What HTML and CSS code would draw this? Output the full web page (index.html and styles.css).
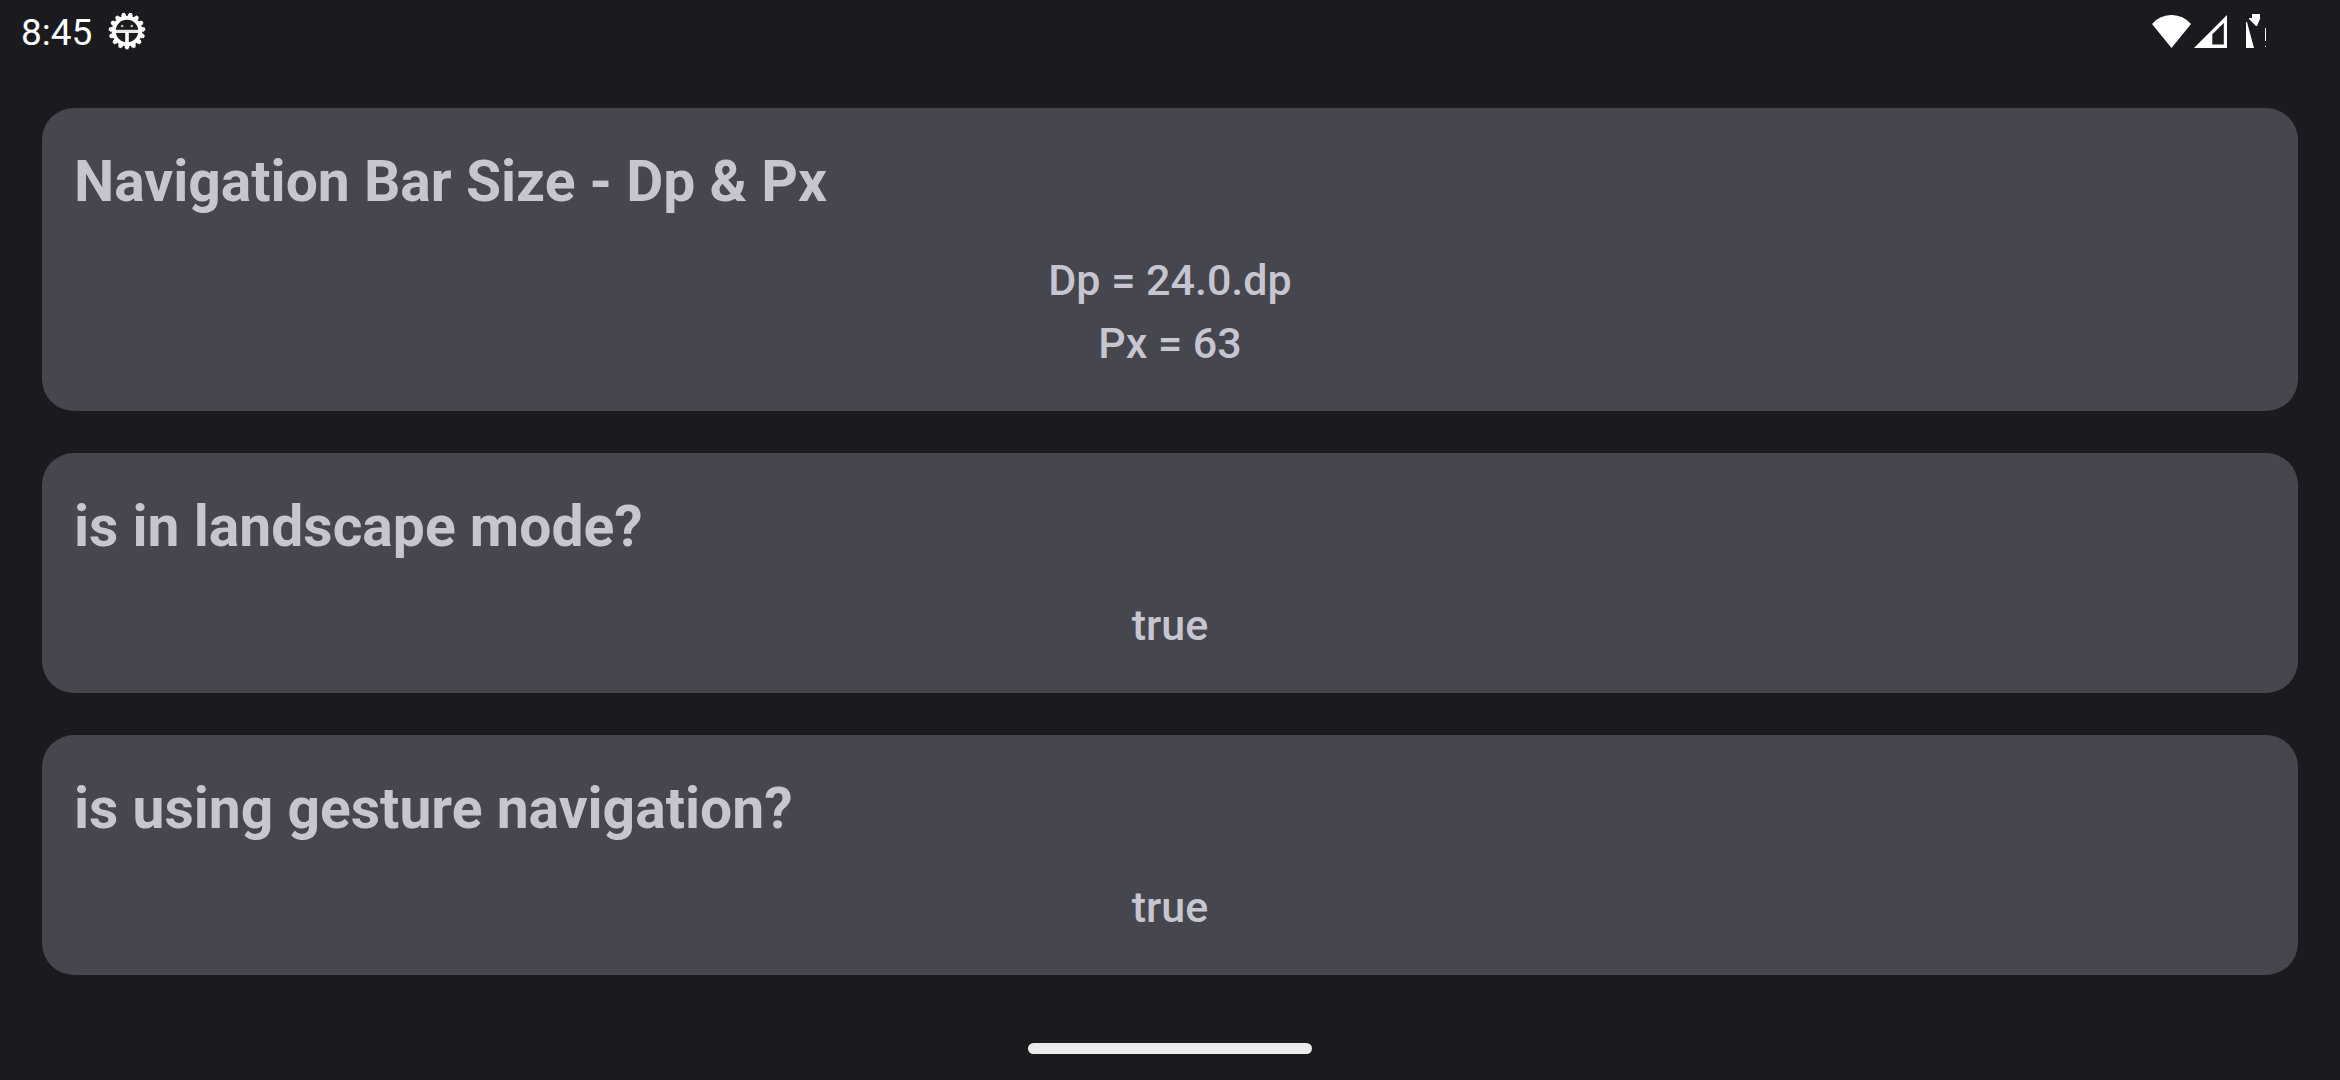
FILE: index.html
```html
<!DOCTYPE html>
<html lang="en">
<head>
<meta charset="utf-8">
<meta name="viewport" content="width=device-width, initial-scale=1">
<title>Navigation Bar Size</title>
<link rel="stylesheet" href="styles.css">
</head>
<body>
<header class="status-bar">
  <div class="status-left">
    <time class="clock">8:45</time>
    <svg class="debug-icon" viewBox="0 0 38 38" aria-hidden="true">
      <g fill="none" stroke="#fff">
        <circle cx="19" cy="19" r="13.3" stroke-width="4"/>
        <circle cx="19" cy="19" r="15.8" stroke-width="2.4" pathLength="150" stroke-dasharray="7 3" stroke-dashoffset="-4"/>
        <circle cx="19" cy="19" r="17.4" stroke-width="1.8" pathLength="150" stroke-dasharray="4.4 5.6" stroke-dashoffset="-5.3"/>
        <path d="M7 19.4H31" stroke-width="3.2" opacity=".9"/>
        <path d="M19 20V32" stroke-width="3.6"/>
      </g>
      <g fill="#fff" opacity=".7"><circle cx="14.2" cy="14" r="1.3"/><circle cx="23.8" cy="14" r="1.3"/></g>
    </svg>
  </div>
  <div class="status-right">
    <svg class="wifi-icon" viewBox="0 0 39 33" aria-hidden="true"><path d="M0 9A25.6 25.6 0 0 1 39 9L19.5 33Z" fill="#fff"/></svg>
    <svg class="signal-icon" viewBox="0 0 33 33" aria-hidden="true"><path d="M0 33L33 0V33ZM18.3 19.3V29.6H29.8V8Z" fill="#fff" fill-rule="evenodd"/></svg>
    <svg class="battery-icon" viewBox="0 0 20 34" aria-hidden="true"><path d="M0 8H1L8 34H0ZM6 0H14V5L11 12H10L3 5V4H6ZM19 14H20V27H19ZM19 32H20V33H19Z" fill="#fff"/></svg>
  </div>
</header>
<main class="cards">
  <section class="card">
    <h2 class="card-title">Navigation Bar Size - Dp &amp; Px</h2>
    <p class="card-value">Dp = 24.0.dp</p>
    <p class="card-value">Px = 63</p>
  </section>
  <section class="card">
    <h2 class="card-title">is in landscape mode?</h2>
    <p class="card-value">true</p>
  </section>
  <section class="card">
    <h2 class="card-title">is using gesture navigation?</h2>
    <p class="card-value">true</p>
  </section>
</main>
<footer class="gesture-bar"><div class="gesture-handle"></div></footer>
</body>
</html>
```
FILE: styles.css
```css
* { box-sizing: border-box; }
body {
  margin: 0;
  min-height: 100vh;
  display: flex;
  flex-direction: column;
  background: #1b1b1f;
  color: #c6c5d0;
  font-family: Roboto, sans-serif;
}
.status-bar {
  display: flex;
  justify-content: space-between;
  align-items: center;
  height: 62px;
  padding: 0 74px 0 21px;
  color: #fff;
}
.status-left, .status-right { display: flex; align-items: center; }
.status-left { gap: 16px; }
.status-right { gap: 3px; }
.clock { padding-top: 4px; font-size: 37px; line-height: 44px; }
.debug-icon { width: 38px; height: 38px; }
.wifi-icon { width: 39px; height: 33px; }
.signal-icon { width: 33px; height: 33px; }
.battery-icon { width: 20px; height: 34px; margin-left: 16px; }
.cards {
  flex: 1;
  display: flex;
  flex-direction: column;
  gap: 42px;
  padding: 46px 42px 42px;
}
.card {
  padding: 32px 32px 36px;
  border-radius: 32px;
  background: #46464f;
}
.card-title {
  margin: 0 0 25px;
  font-size: 57px;
  line-height: 84px;
  font-weight: 700;
}
.card-value {
  margin: 0;
  font-size: 43px;
  line-height: 63px;
  font-weight: 500;
  text-align: center;
}
.gesture-bar { display: flex; justify-content: center; height: 63px; padding-top: 26px; }
.gesture-handle { width: 284px; height: 11px; border-radius: 6px; background: #ececec; }
```
